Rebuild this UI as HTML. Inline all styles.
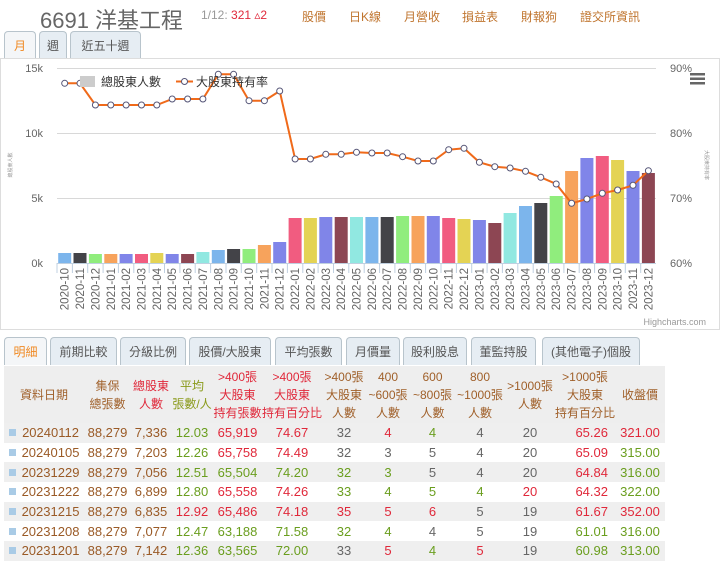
<!DOCTYPE html>
<html><head><meta charset="utf-8">
<style>
*{margin:0;padding:0;box-sizing:border-box}
body{width:720px;height:559px;overflow:hidden;background:#fff;font-family:"Liberation Sans","Noto Sans CJK TC",sans-serif;position:relative}
.abs{position:absolute;white-space:nowrap}
.tab{position:absolute;height:28px;border:1px solid #b8c4cc;border-bottom:none;border-radius:4px 4px 0 0;background:#e6edf3;font-size:12px;color:#555;text-align:center;line-height:28px}
.tab.on{background:#f4f6f8;color:#f08a24}
.lnk{position:absolute;top:8px;font-size:12px;color:#c0752f}
table{position:absolute;left:4px;top:366px;border-collapse:collapse;font-size:13px;width:661px;table-layout:fixed}
td{text-align:center;padding:0;white-space:nowrap}
thead td{background:#eeeeee;font-size:12px;line-height:18px;color:#a0602a}
tbody tr{height:19.7px}
tbody tr:nth-child(odd) td{background:#efefef}
.b{color:#9a5a26}.r{color:#e0283a}.g{color:#6a9e1e}.k{color:#666}
.sq{display:inline-block;width:7px;height:7px;background:#a9cbe6;margin-right:6px;vertical-align:1px}
</style></head><body>
<div class="abs" style="left:40px;top:3px;font-size:22px;color:#666">6691 洋基工程</div>
<div class="abs" style="left:201px;top:8px;font-size:12px;color:#999">1/12: <span style="color:#e0283a">321 ▵2</span></div>
<div class="lnk" style="left:302px">股價</div>
<div class="lnk" style="left:349px">日K線</div>
<div class="lnk" style="left:404px">月營收</div>
<div class="lnk" style="left:462px">損益表</div>
<div class="lnk" style="left:521px">財報狗</div>
<div class="lnk" style="left:580px">證交所資訊</div>

<div class="tab on" style="left:4px;top:31px;width:32px">月</div>
<div class="tab" style="left:39px;top:31px;width:28px">週</div>
<div class="tab" style="left:70px;top:31px;width:71px">近五十週</div>

<div class="abs" style="left:0;top:58px;width:720px;height:272px;border:1px solid #ddd"></div>
<svg class="abs" style="left:0;top:58px" width="720" height="272" viewBox="0 58 720 272" font-family="Liberation Sans, Noto Sans CJK TC, sans-serif">
<g stroke="#d8d8d8" stroke-width="1">
<line x1="57" y1="68.5" x2="656" y2="68.5"/><line x1="57" y1="133.5" x2="656" y2="133.5"/><line x1="57" y1="198.5" x2="656" y2="198.5"/><line x1="57" y1="263.5" x2="656" y2="263.5" stroke="#c0d0e0"/>
</g>
<g font-size="11" fill="#666" text-anchor="end">
<text x="43" y="72">15k</text><text x="43" y="137">10k</text><text x="43" y="202">5k</text><text x="43" y="267">0k</text>
</g>
<g font-size="11" fill="#666">
<text x="670" y="72">90%</text><text x="670" y="137">80%</text><text x="670" y="202">70%</text><text x="670" y="267">60%</text>
</g>
<text font-size="5" fill="#999" transform="translate(12,165) rotate(-90)" text-anchor="middle">總股東人數</text>
<text font-size="5" fill="#999" transform="translate(705,165) rotate(90)" text-anchor="middle">大股東持有率</text>
<g id="bars"></g>
<g id="ticks" stroke="#c0d0e0"></g>
<g id="labels" font-size="11.5" fill="#666"></g>
<polyline id="line" fill="none" stroke="#f06a1a" stroke-width="2"/>
<g id="dots" fill="#fff" stroke="#557" stroke-width="1"></g>
<rect x="80" y="76" width="15" height="11" fill="#ccc"/>
<text x="101" y="86" font-size="12" fill="#333">總股東人數</text>
<line x1="176" y1="81.5" x2="193" y2="81.5" stroke="#f06a1a" stroke-width="2"/>
<circle cx="184.5" cy="81.5" r="3" fill="#fff" stroke="#557"/>
<text x="196" y="86" font-size="12" fill="#333">大股東持有率</text>
<g fill="#666"><rect x="690" y="73" width="15" height="2.5"/><rect x="690" y="77.5" width="15" height="2.5"/><rect x="690" y="82" width="15" height="2.5"/></g>
<text x="706" y="325" font-size="9" fill="#999" text-anchor="end">Highcharts.com</text>
</svg>
<script>
(function(){
var h=[10,10,9,9,9,9,10,9,9,11,13,14,14,18,21,45,45,46,46,46,46,46,47,47,47,45,44,43,40,50,57,60,67,92,105,107,103,92,90];
var ly=[83.3,83.3,105,105,105,105,105,99,99,99,74.3,74.3,100.7,100.7,91,159,159,154.3,154.3,152.3,153,153,156.7,161,161,149.7,148.3,162.3,166.7,168,171.3,177.3,184,203.3,199,193.3,190,185.3,170.7];
var pal=['#7cb5ec','#434348','#90ed7d','#f7a35c','#8085e9','#f15c80','#e4d354','#8085e8','#8d4653','#91e8e1'];
var ns='http://www.w3.org/2000/svg';
var B=document.getElementById('bars'),T=document.getElementById('ticks'),L=document.getElementById('labels'),D=document.getElementById('dots');
var pts=[];
for(var i=0;i<39;i++){
 var cx=57+15.36*(i+0.5);
 var r=document.createElementNS(ns,'rect');
 r.setAttribute('x',(cx-6.5).toFixed(1));r.setAttribute('y',263-h[i]);r.setAttribute('width',13);r.setAttribute('height',h[i]);r.setAttribute('fill',pal[i%10]);B.appendChild(r);
 var tk=document.createElementNS(ns,'line');var tx=(57+15.36*i).toFixed(1);
 tk.setAttribute('x1',tx);tk.setAttribute('x2',tx);tk.setAttribute('y1',263);tk.setAttribute('y2',273);T.appendChild(tk);
 var m=(9+i)%12+1,y=2020+Math.floor((9+i)/12);
 var t=document.createElementNS(ns,'text');
 t.setAttribute('transform','translate('+(cx+4).toFixed(1)+',268) rotate(-90)');t.setAttribute('text-anchor','end');
 t.textContent=y+'-'+(m<10?'0':'')+m;L.appendChild(t);
 pts.push(cx.toFixed(1)+','+ly[i]);
 var c=document.createElementNS(ns,'circle');c.setAttribute('cx',cx.toFixed(1));c.setAttribute('cy',ly[i]);c.setAttribute('r',3);D.appendChild(c);
}
document.getElementById('line').setAttribute('points',pts.join(' '));
})();
</script>

<div class="tab on" style="left:4px;top:337px;width:43px">明細</div>
<div class="tab" style="left:50px;top:337px;width:67px">前期比較</div>
<div class="tab" style="left:120px;top:337px;width:66px">分級比例</div>
<div class="tab" style="left:189px;top:337px;width:82px">股價/大股東</div>
<div class="tab" style="left:275px;top:337px;width:67px">平均張數</div>
<div class="tab" style="left:346px;top:337px;width:54px">月價量</div>
<div class="tab" style="left:403px;top:337px;width:64px">股利股息</div>
<div class="tab" style="left:471px;top:337px;width:65px">董監持股</div>
<div class="tab" style="left:542px;top:337px;width:98px">(其他電子)個股</div>

<table>
<colgroup><col style="width:80px"><col style="width:47px"><col style="width:40px"><col style="width:42px"><col style="width:49px"><col style="width:60px"><col style="width:44px"><col style="width:44px"><col style="width:45px"><col style="width:50px"><col style="width:50px"><col style="width:60px"><col style="width:50px"></colgroup>
<thead><tr style="height:57px">
<td>資料日期</td><td>集保<br>總張數</td><td class="r">總股東<br>人數</td><td style="color:#8a9a1a">平均<br>張數/人</td>
<td class="r">&gt;400張<br>大股東<br>持有張數</td><td class="r">&gt;400張<br>大股東<br>持有百分比</td><td>&gt;400張<br>大股東<br>人數</td>
<td>400<br>~600張<br>人數</td><td>600<br>~800張<br>人數</td><td>800<br>~1000張<br>人數</td><td>&gt;1000張<br>人數</td>
<td>&gt;1000張<br>大股東<br>持有百分比</td><td>收盤價</td></tr></thead>
<tbody>
<tr><td class="b"><span class="sq"></span>20240112</td><td class="b">88,279</td><td class="b">7,336</td><td class="g">12.03</td><td class="r">65,919</td><td class="r">74.67</td><td class="k">32</td><td class="r">4</td><td class="g">4</td><td class="k">4</td><td class="k">20</td><td class="r" style="text-align:right;padding-right:7px">65.26</td><td class="r">321.00</td></tr>
<tr><td class="b"><span class="sq"></span>20240105</td><td class="b">88,279</td><td class="b">7,203</td><td class="g">12.26</td><td class="r">65,758</td><td class="r">74.49</td><td class="k">32</td><td class="k">3</td><td class="k">5</td><td class="k">4</td><td class="k">20</td><td class="r" style="text-align:right;padding-right:7px">65.09</td><td class="g">315.00</td></tr>
<tr><td class="b"><span class="sq"></span>20231229</td><td class="b">88,279</td><td class="b">7,056</td><td class="g">12.51</td><td class="g">65,504</td><td class="g">74.20</td><td class="g">32</td><td class="g">3</td><td class="k">5</td><td class="k">4</td><td class="k">20</td><td class="r" style="text-align:right;padding-right:7px">64.84</td><td class="g">316.00</td></tr>
<tr><td class="b"><span class="sq"></span>20231222</td><td class="b">88,279</td><td class="b">6,899</td><td class="g">12.80</td><td class="r">65,558</td><td class="r">74.26</td><td class="g">33</td><td class="g">4</td><td class="g">5</td><td class="g">4</td><td class="r">20</td><td class="r" style="text-align:right;padding-right:7px">64.32</td><td class="g">322.00</td></tr>
<tr><td class="b"><span class="sq"></span>20231215</td><td class="b">88,279</td><td class="b">6,835</td><td class="r">12.92</td><td class="r">65,486</td><td class="r">74.18</td><td class="r">35</td><td class="r">5</td><td class="r">6</td><td class="k">5</td><td class="k">19</td><td class="r" style="text-align:right;padding-right:7px">61.67</td><td class="r">352.00</td></tr>
<tr><td class="b"><span class="sq"></span>20231208</td><td class="b">88,279</td><td class="b">7,077</td><td class="g">12.47</td><td class="g">63,188</td><td class="g">71.58</td><td class="g">32</td><td class="g">4</td><td class="k">4</td><td class="k">5</td><td class="k">19</td><td class="g" style="text-align:right;padding-right:7px">61.01</td><td class="g">316.00</td></tr>
<tr><td class="b"><span class="sq"></span>20231201</td><td class="b">88,279</td><td class="b">7,142</td><td class="g">12.36</td><td class="g">63,565</td><td class="g">72.00</td><td class="k">33</td><td class="r">5</td><td class="g">4</td><td class="r">5</td><td class="k">19</td><td class="g" style="text-align:right;padding-right:7px">60.98</td><td class="g">313.00</td></tr>
</tbody></table>
</body></html>
